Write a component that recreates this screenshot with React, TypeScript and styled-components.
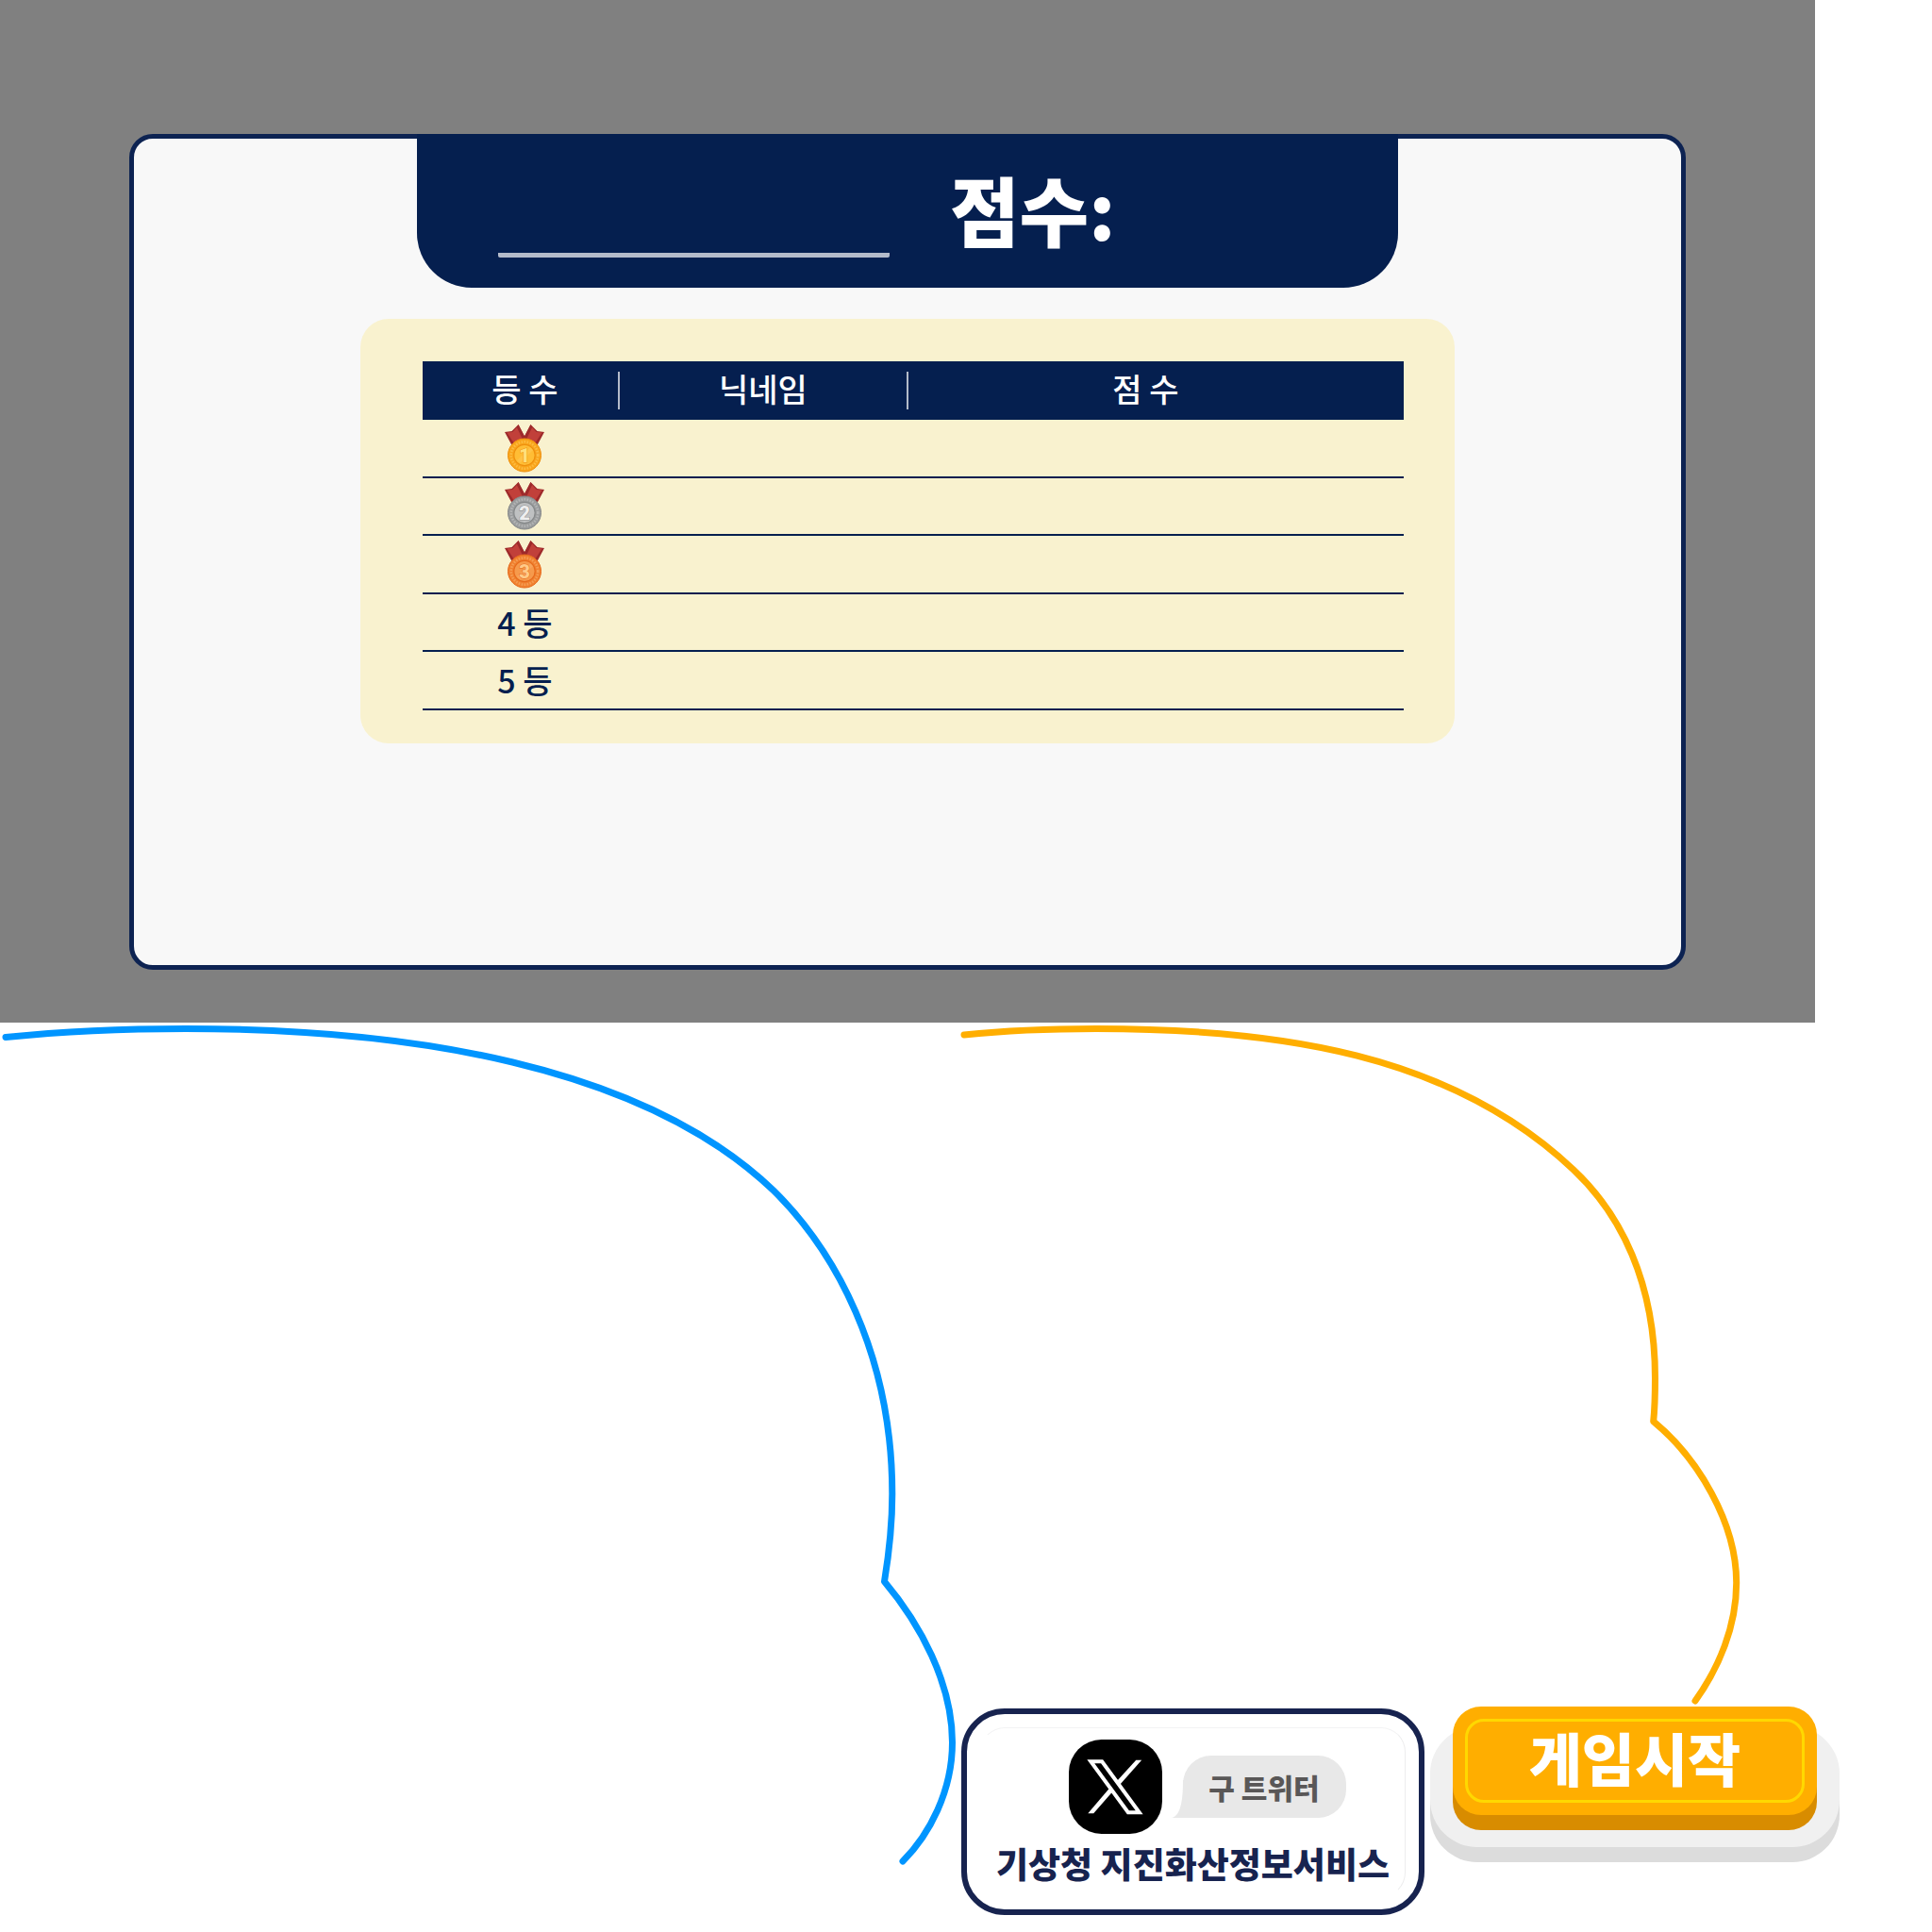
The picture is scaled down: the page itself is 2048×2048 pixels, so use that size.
import React, { useState } from "react";
import styled, { createGlobalStyle } from "styled-components";

const navy = "#051f4f";
const ink = "#17234f";
const amber = "#ffae00";

const GlobalStyle = createGlobalStyle`
  *, *::before, *::after { box-sizing: border-box; }
  body {
    margin: 0;
    background: #ffffff;
    font-family: "Noto Sans CJK KR", "Noto Sans", sans-serif;
  }
`;

const Page = styled.main`
  display: flex;
  flex-direction: column;
`;

const Overlay = styled.section`
  width: 100%;
  max-width: 1924px;
  padding: 142px 137px 56px;
  background: #808080;
`;

const Panel = styled.div`
  display: flex;
  flex-direction: column;
  align-items: center;
  gap: 33px;
  min-height: 886px;
  border: 5px solid #0d2352;
  border-radius: 25px;
  background: #f8f8f8;
`;

const ScoreTab = styled.header`
  display: flex;
  align-items: flex-end;
  gap: 64px;
  width: 100%;
  max-width: 1040px;
  height: 163px;
  margin-top: -5px;
  padding: 0 86px 32px;
  border-radius: 0 0 58px 58px;
  background: ${navy};
  color: #ffffff;
`;

const NicknameInput = styled.input`
  width: 415px;
  height: 96px;
  padding: 0;
  border: 0;
  border-bottom: 5px solid #b4bbca;
  border-radius: 2px;
  outline: 0;
  background: transparent;
  color: #ffffff;
  font: inherit;
  font-size: 60px;
  text-align: center;
`;

const ScoreLabel = styled.h1`
  margin: 0;
  font-size: 80px;
  line-height: 106px;
  font-weight: 900;
`;

const Board = styled.div`
  width: 100%;
  max-width: 1160px;
  padding: 45px 54px 35px 66px;
  border-radius: 30px;
  background: #f9f2cf;
`;

const RankTable = styled.table`
  width: 100%;
  table-layout: fixed;
  border-collapse: separate;
  border-spacing: 0;
  color: ${navy};
  font-size: 34px;
  line-height: 40px;
  text-align: center;
`;

const HeadRow = styled.tr`
  height: 62px;
  background: ${navy};
  color: #ffffff;
`;

const HeadCell = styled.th<{ $width?: string; $pad?: string }>`
  width: ${(p) => p.$width ?? "auto"};
  padding: 0;
  font-weight: 500;

  & > span {
    display: block;
    height: 40px;
    padding: ${(p) => p.$pad ?? "0"};
    line-height: 36px;
  }

  th + & > span {
    border-left: 2px solid #b4bbca;
  }
`;

const BodyRow = styled.tr`
  height: 62px;

  &:nth-child(even) {
    height: 61px;
  }

  & > * {
    border-bottom: 2px solid ${navy};
  }
`;

const RankCell = styled.th`
  padding: 0 0 0 10px;
  font-weight: 500;

  & > svg {
    display: block;
    margin: 0 auto;
  }
`;

const Cell = styled.td`
  padding: 0;
`;

const Assets = styled.section`
  display: flex;
  align-items: flex-start;
`;

const Outline = styled.svg`
  display: block;
  flex: none;
  fill: none;
  stroke-width: 7px;
  stroke-linecap: round;
  stroke-linejoin: round;
`;

const Side = styled.div`
  display: flex;
  flex-direction: column;
`;

const Actions = styled.div`
  display: flex;
  align-items: flex-start;
  gap: 6px;
  padding-left: 5px;
`;

const ServiceLink = styled.a`
  position: relative;
  display: flex;
  flex-direction: column;
  align-items: center;
  gap: 6px;
  width: 491px;
  height: 219px;
  margin-top: 2px;
  padding: 27px 0 0;
  border: 6px solid ${ink};
  border-radius: 46px;
  background: #ffffff;
  color: ${ink};
  font-size: 37px;
  line-height: 50px;
  font-weight: 900;
  text-decoration: none;
  white-space: nowrap;

  &::before {
    content: "";
    position: absolute;
    inset: 14px 14px 13px;
    border: 1px solid transparent;
    border-top-color: #f3f3f4;
    border-right-color: #ededee;
    border-radius: 26px;
  }
`;

const Brand = styled.span`
  display: flex;
  align-items: center;
  gap: 10px;
  padding-left: 30px;
`;

const Speech = styled.span`
  position: relative;
  display: flex;
  align-items: center;
  justify-content: center;
  width: 173px;
  height: 66px;
  margin-left: 12px;
  border-radius: 30px 30px 30px 0;
  background: #e8e8e8;
  color: #595757;
  font-size: 30px;
  line-height: 40px;

  & > svg {
    position: absolute;
    left: -12px;
    bottom: 0;
  }
`;

const Plate = styled.div`
  position: relative;
  width: 434px;
  height: 166px;
  padding: 0 24px;

  &::before {
    content: "";
    position: absolute;
    inset: 21px 0 17px;
    border-radius: 50px;
    background: #f0f0f0;
    box-shadow: 0 16px 0 #dcdcdc;
  }
`;

const StartButton = styled.button`
  position: relative;
  display: block;
  width: 100%;
  height: 115px;
  padding: 13px;
  border: 0;
  border-radius: 30px;
  background: ${amber};
  box-shadow: 0 16px 0 #d88c00;
  color: #ffffff;
  font: inherit;
  font-size: 61px;
  line-height: 76px;
  font-weight: 900;
  cursor: pointer;
`;

const StartFace = styled.span`
  display: block;
  height: 89px;
  border: 3px solid #ffd800;
  border-radius: 20px;
`;

type Metal = { rim: string; edge: string; face: string; ring: string; digit: string };

const metals: Metal[] = [
  { rim: "#f9a51c", edge: "#ee8f0e", face: "#ffbd35", ring: "#ffca5a", digit: "#ffe07a" },
  { rim: "#9a9c9d", edge: "#858889", face: "#bfc1c2", ring: "#c4c6c7", digit: "#eeeeee" },
  { rim: "#f0802f", edge: "#e66a1c", face: "#f69a4c", ring: "#f9b06c", digit: "#ffca88" },
];

function Medal({ rank }: { rank: number }) {
  const m = metals[rank - 1];
  return (
    <svg width="42" height="51" viewBox="0 0 42 51" role="img" aria-label={`${rank}등`}>
      <path d="M0 8 7.500 7 14.500 0 24 19 7 21Z" fill="#9e2a2b" />
      <path d="M42 8 34.500 7 27.500 0 18 19 35 21Z" fill="#9e2a2b" />
      <path d="M2.500 8.500 8.500 8 13 3 21 17 10 20Z" fill="#c1403a" />
      <path d="M39.500 8.500 33.500 8 29 3 21 17 32 20Z" fill="#c1403a" />
      <path d="M14.500 0 22 14 19.500 17 13 3Z" fill="#9e2a2b" />
      <path d="M27.500 0 20 14 22.500 17 29 3Z" fill="#9e2a2b" />
      <circle cx="21" cy="32.500" r="17.500" fill={m.rim} stroke={m.edge} />
      <circle
        cx="21"
        cy="32.500"
        r="14.200"
        fill="none"
        stroke={m.ring}
        strokeWidth="2.600"
        strokeDasharray="1.600 1.400"
        opacity="0.6"
      />
      <circle cx="21" cy="32.500" r="11.200" fill={m.face} stroke={m.edge} strokeWidth="1.200" />
      <path d="M13 38 27 24.500 30 27 16 41Z" fill={m.ring} opacity="0.5" />
      <text
        x="21"
        y="39.500"
        textAnchor="middle"
        fontFamily="Roboto, sans-serif"
        fontSize="20"
        fontWeight="900"
        fill={m.digit}
        stroke={m.edge}
        strokeWidth="1"
        paintOrder="stroke"
      >
        {rank}
      </text>
    </svg>
  );
}

function XLogo() {
  return (
    <svg width="99" height="100" viewBox="0 0 100 101" aria-hidden="true">
      <rect width="100" height="101" rx="35" fill="#000000" />
      <path d="M23.500 23.500H35.500L75.500 78H63.500Z" fill="none" stroke="#ffffff" strokeWidth="4" />
      <path d="M72 22H78L54.500 48.500 51.500 44.500Z" fill="#ffffff" />
      <path d="M20.500 79H26.500L47 55.500 44 51.500Z" fill="#ffffff" />
    </svg>
  );
}

export default function App() {
  const [nickname, setNickname] = useState("");

  return (
    <Page>
      <GlobalStyle />
      <Overlay>
        <Panel>
          <ScoreTab>
            <NicknameInput
              aria-label="닉네임"
              value={nickname}
              onChange={(e) => setNickname(e.target.value)}
            />
            <ScoreLabel>점수:</ScoreLabel>
          </ScoreTab>
          <Board>
            <RankTable>
              <thead>
                <HeadRow>
                  <HeadCell scope="col" $width="19.900%" $pad="0 0 0 10px">
                    <span>등 수</span>
                  </HeadCell>
                  <HeadCell scope="col" $width="29.400%">
                    <span>닉네임</span>
                  </HeadCell>
                  <HeadCell scope="col" $pad="0 22px 0 0">
                    <span>점 수</span>
                  </HeadCell>
                </HeadRow>
              </thead>
              <tbody>
                {[1, 2, 3, 4, 5].map((rank) => (
                  <BodyRow key={rank}>
                    <RankCell scope="row">{rank <= 3 ? <Medal rank={rank} /> : `${rank} 등`}</RankCell>
                    <Cell />
                    <Cell />
                  </BodyRow>
                ))}
              </tbody>
            </RankTable>
          </Board>
        </Panel>
      </Overlay>

      <Assets>
        <Outline width="1014" height="900" viewBox="0 0 1014 900" stroke="#0095ff" aria-hidden="true">
          <path d="M6 15.500C70 9 133 6.500 197 6.500C430 6.500 680 44 820 178C884 241 945.800 350 945.800 499.500C945.800 532 942 565 937.500 592.500C975 637 1009.500 700 1009.500 763C1009.500 815 985 861 957 889" />
        </Outline>
        <Side>
          <Outline width="850" height="725" viewBox="4 0 850 725" stroke={amber} aria-hidden="true">
            <path d="M12 13C60 8 105 6.500 152 6.500C345 6.500 528 33 658 156C708 203 744.500 275 744.500 377C744.500 395 744 410 742.700 422.700C790 462 830.700 530 830.700 593.700C830.700 640 812 684 787 719" />
          </Outline>
          <Actions>
            <ServiceLink href="#service">
              <Brand>
                <XLogo />
                <Speech>
                  <svg width="24" height="40" viewBox="0 0 24 40" aria-hidden="true">
                    <path d="M12 0C12 20 10 38 0 40H24V0Z" fill="#e8e8e8" />
                  </svg>
                  구 트위터
                </Speech>
              </Brand>
              기상청 지진화산정보서비스
            </ServiceLink>
            <Plate>
              <StartButton type="button">
                <StartFace>게임시작</StartFace>
              </StartButton>
            </Plate>
          </Actions>
        </Side>
      </Assets>
    </Page>
  );
}
